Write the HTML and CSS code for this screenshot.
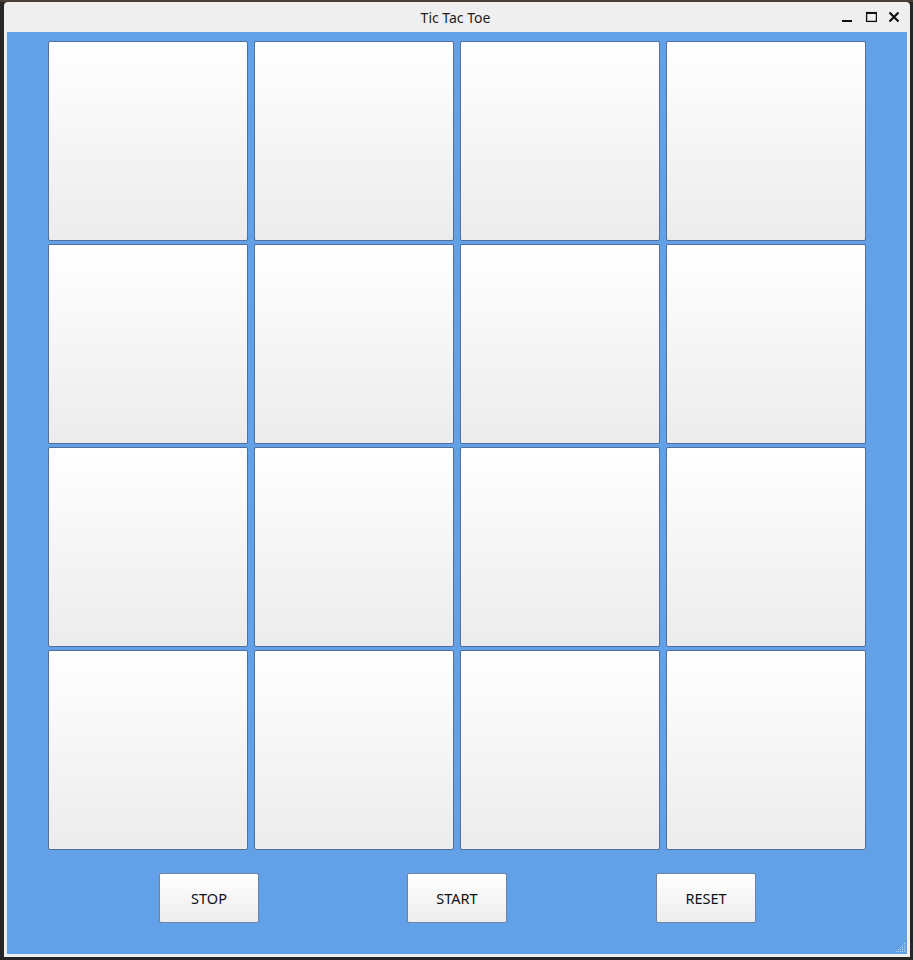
FILE: index.html
```html
<!DOCTYPE html>
<html>
<head>
<meta charset="utf-8">
<title>Tic Tac Toe</title>
<link rel="stylesheet" href="styles.css">
</head>
<body>
<div class="desktop">
  <div class="window">
    <div class="titlebar">
      <span class="title">Tic Tac Toe</span>
      <div class="controls">
        <svg class="ctl" width="12" height="12" viewBox="0 0 12 12"><rect x="0" y="9" width="10" height="2" fill="#111"/></svg>
        <svg class="ctl" width="12" height="12" viewBox="0 0 12 12"><rect x="1.6" y="1.6" width="9.8" height="8.8" fill="none" stroke="#111" stroke-width="1.3"/><rect x="1" y="1" width="11" height="2" fill="#111"/></svg>
        <svg class="ctl" width="12" height="12" viewBox="0 0 12 12"><path d="M1.5 1.5 L10.5 10.5 M10.5 1.5 L1.5 10.5" stroke="#111" stroke-width="2.2"/></svg>
      </div>
    </div>
    <div class="content">
      <div class="board">
        <button class="cell"></button><button class="cell"></button><button class="cell"></button><button class="cell"></button>
        <button class="cell"></button><button class="cell"></button><button class="cell"></button><button class="cell"></button>
        <button class="cell"></button><button class="cell"></button><button class="cell"></button><button class="cell"></button>
        <button class="cell"></button><button class="cell"></button><button class="cell"></button><button class="cell"></button>
      </div>
      <div class="actions">
        <button class="btn">STOP</button>
        <button class="btn">START</button>
        <button class="btn">RESET</button>
      </div>
      <svg class="grip" width="10" height="10" viewBox="0 0 10 10">
        <g fill="#b9d3f2">
          <rect x="8" y="0" width="1" height="1"/>
          <rect x="6" y="2" width="1" height="1"/><rect x="8" y="2" width="1" height="1"/>
          <rect x="4" y="4" width="1" height="1"/><rect x="6" y="4" width="1" height="1"/><rect x="8" y="4" width="1" height="1"/>
          <rect x="2" y="6" width="1" height="1"/><rect x="4" y="6" width="1" height="1"/><rect x="6" y="6" width="1" height="1"/><rect x="8" y="6" width="1" height="1"/>
          <rect x="0" y="8" width="1" height="1"/><rect x="2" y="8" width="1" height="1"/><rect x="4" y="8" width="1" height="1"/><rect x="6" y="8" width="1" height="1"/><rect x="8" y="8" width="1" height="1"/>
        </g>
      </svg>
    </div>
  </div>
</div>
</body>
</html>
```
FILE: styles.css
```css
html, body {
  margin: 0;
  padding: 0;
  background: #262626;
  width: 913px;
  height: 960px;
  overflow: hidden;
}
.desktop {
  padding: 2px 0 0 4px;
  background: linear-gradient(#4a3e38 0, #4a3e38 2px, #262626 2px);
  height: 958px;
}
.window {
  width: 906px;
  height: 955px;
  background: #efefef;
  border-radius: 4px 4px 0 0;
  display: flex;
  flex-direction: column;
  font-family: "Noto Sans", "Open Sans", sans-serif;
}
.titlebar {
  height: 30px;
  flex: none;
  display: flex;
  align-items: center;
  justify-content: center;
  position: relative;
}
.title {
  font-size: 14px;
  color: #1e1e1e;
  margin-left: -3px;
}
.controls {
  position: absolute;
  right: 10px;
  top: 9px;
  display: flex;
  gap: 11px;
}
.ctl { display: block; }
.content {
  flex: 1;
  margin: 0 3px 3px 3px;
  background: #62a0e8;
  padding: 9px 0 0 41px;
  position: relative;
}
.board {
  display: grid;
  grid-template-columns: repeat(4, 200px);
  grid-auto-rows: 200px;
  column-gap: 6px;
  row-gap: 3px;
}
.cell {
  margin: 0;
  padding: 0;
  border: 1px solid #50709a;
  border-radius: 2px;
  background: linear-gradient(#ffffff, #ececec);
}
.actions {
  display: flex;
  margin: 23px 0 0 111px;
}
.btn {
  width: 100px;
  height: 50px;
  margin: 0 148px 0 0;
  border: 1px solid #6c84a4;
  border-radius: 2px;
  background: linear-gradient(#ffffff, #ededed);
  font-family: "Noto Sans", "Open Sans", sans-serif;
  font-size: 14.5px;
  color: #111;
  padding: 0;
}
.btn:last-child { margin-left: 1px; }
.grip {
  position: absolute;
  right: 1px;
  bottom: 1px;
}
```
